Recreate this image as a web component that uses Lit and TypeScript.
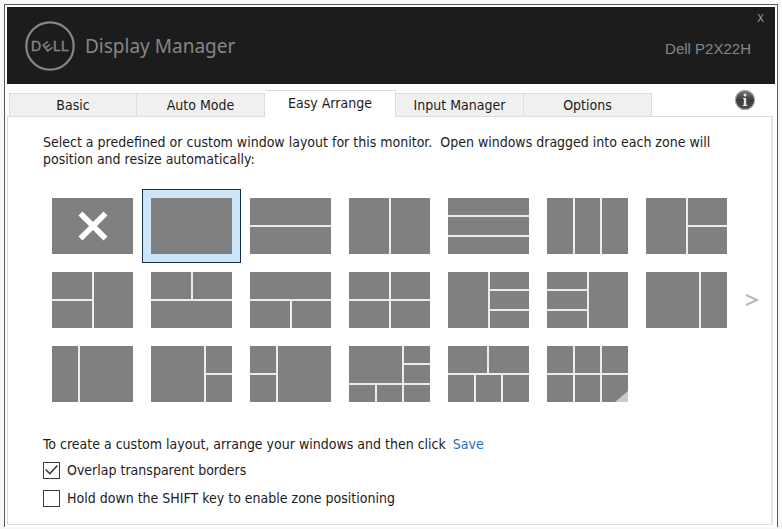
import { LitElement, html, css, svg } from "lit";
import { customElement, property, state } from "lit/decorators.js";
import { classMap } from "lit/directives/class-map.js";
import { styleMap } from "lit/directives/style-map.js";

/** A zone on a 6 × 6 track grid: column start, column span, row start, row span. */
type Zone = [number, number, number, number];

interface Layout {
  name: string;
  zones: Zone[];
  none?: boolean;
  more?: boolean;
}

const LAYOUTS: Layout[] = [
  { name: "No layout", zones: [[1, 6, 1, 6]], none: true },
  { name: "Full screen", zones: [[1, 6, 1, 6]] },
  { name: "Two rows", zones: [[1, 6, 1, 3], [1, 6, 4, 3]] },
  { name: "Two columns", zones: [[1, 3, 1, 6], [4, 3, 1, 6]] },
  { name: "Three rows", zones: [[1, 6, 1, 2], [1, 6, 3, 2], [1, 6, 5, 2]] },
  { name: "Three columns", zones: [[1, 2, 1, 6], [3, 2, 1, 6], [5, 2, 1, 6]] },
  { name: "Left half, two right", zones: [[1, 3, 1, 6], [4, 3, 1, 3], [4, 3, 4, 3]] },
  { name: "Two left, right half", zones: [[1, 3, 1, 3], [1, 3, 4, 3], [4, 3, 1, 6]] },
  { name: "Two top, bottom half", zones: [[1, 3, 1, 3], [4, 3, 1, 3], [1, 6, 4, 3]] },
  { name: "Top half, two bottom", zones: [[1, 6, 1, 3], [1, 3, 4, 3], [4, 3, 4, 3]] },
  { name: "Four quarters", zones: [[1, 3, 1, 3], [4, 3, 1, 3], [1, 3, 4, 3], [4, 3, 4, 3]] },
  { name: "Left half, three right", zones: [[1, 3, 1, 6], [4, 3, 1, 2], [4, 3, 3, 2], [4, 3, 5, 2]] },
  { name: "Three left, right half", zones: [[1, 3, 1, 2], [1, 3, 3, 2], [1, 3, 5, 2], [4, 3, 1, 6]] },
  { name: "Wide left", zones: [[1, 4, 1, 6], [5, 2, 1, 6]] },
  { name: "Wide right", zones: [[1, 2, 1, 6], [3, 4, 1, 6]] },
  { name: "Wide left, two right", zones: [[1, 4, 1, 6], [5, 2, 1, 3], [5, 2, 4, 3]] },
  { name: "Two left, wide right", zones: [[1, 2, 1, 3], [1, 2, 4, 3], [3, 4, 1, 6]] },
  {
    name: "One large, five small",
    zones: [[1, 4, 1, 4], [5, 2, 1, 2], [5, 2, 3, 2], [1, 2, 5, 2], [3, 2, 5, 2], [5, 2, 5, 2]],
  },
  {
    name: "Two top, three bottom",
    zones: [[1, 3, 1, 3], [4, 3, 1, 3], [1, 2, 4, 3], [3, 2, 4, 3], [5, 2, 4, 3]],
  },
  {
    name: "Six zones",
    zones: [[1, 2, 1, 3], [3, 2, 1, 3], [5, 2, 1, 3], [1, 2, 4, 3], [3, 2, 4, 3], [5, 2, 4, 3]],
    more: true,
  },
];

@customElement("layout-tile")
class LayoutTile extends LitElement {
  @property({ attribute: false }) layout!: Layout;
  @property({ type: Boolean }) selected = false;

  static styles = css`
    :host {
      display: block;
      height: 56px;
    }
    .tile {
      position: relative;
      display: grid;
      grid-template-columns: repeat(6, 1fr);
      grid-template-rows: repeat(6, 1fr);
      gap: 2px;
      width: 100%;
      height: 100%;
      margin: 0;
      padding: 0;
      border: 0;
      background: #ececec;
      cursor: pointer;
    }
    .selected {
      box-shadow: 0 0 0 8px #cce5f9, 0 0 0 9px #12304a;
    }
    .zone {
      background: #808080;
    }
    .cross {
      position: absolute;
      inset: 0;
      margin: auto;
      width: 30px;
      height: 30px;
    }
    .corner {
      position: absolute;
      right: 0;
      bottom: 0;
      width: 13px;
      height: 11px;
      background: #cacaca;
      clip-path: polygon(100% 0, 100% 100%, 0 100%);
    }
  `;

  render() {
    const { name, zones, none, more } = this.layout;
    return html`<button
      class=${classMap({ tile: true, selected: this.selected })}
      aria-label=${name}
      aria-pressed=${this.selected}
    >
      ${zones.map(
        ([c, cs, r, rs]) =>
          html`<span class="zone" style=${styleMap({ gridArea: `${r} / ${c} / span ${rs} / span ${cs}` })}></span>`
      )}
      ${none
        ? html`<svg class="cross" viewBox="0 0 30 30">
            <path d="M2.500 2.500 27.500 27.500M27.500 2.500 2.500 27.500" stroke="#fff" stroke-width="5.600" />
          </svg>`
        : null}
      ${more ? html`<span class="corner"></span>` : null}
    </button>`;
  }
}

const dellMark = svg`
  <circle cx="26" cy="26" r="23.7" fill="none" stroke="#868686" stroke-width="2.2" />
  <g fill="#868686" font-family="Liberation Sans, Arial, sans-serif" font-size="14" stroke="#868686" stroke-width="0.4">
    <text x="7" y="31">D</text>
    <text x="-4.500" y="4.500" font-size="12" transform="translate(23.500 26) rotate(-38)">E</text>
    <text x="29" y="31">L</text>
    <text x="37" y="31">L</text>
  </g>`;

@customElement("app-root")
class AppRoot extends LitElement {
  @state() private tab = "Easy Arrange";
  @state() private chosen = 1;

  private tabs = ["Basic", "Auto Mode", "Easy Arrange", "Input Manager", "Options"];

  static styles = css`
    :host {
      display: block;
      box-sizing: border-box;
      min-height: 100vh;
      padding: 4px 4px 3px;
      background: #f8f8f8;
      color: #1c1c1c;
      font: 14px/17px "DejaVu Sans Condensed", Tahoma, "Noto Sans", sans-serif;
    }
    button,
    input {
      margin: 0;
      font: inherit;
      color: inherit;
    }
    .window {
      border: 1px solid #5a5a5a;
      border-bottom: 0;
      padding: 2px;
      background: #fff;
    }
    .header {
      display: flex;
      align-items: center;
      gap: 9px;
      box-sizing: border-box;
      height: 77px;
      padding: 0 10px 0 17px;
      background: #1c1c1c;
      color: #868686;
    }
    .logo {
      width: 52px;
      height: 52px;
    }
    .title {
      flex: 1;
      margin: 0;
      font: 19px/28px "Noto Sans", "Open Sans", sans-serif;
    }
    .side {
      display: flex;
      flex-direction: column;
      align-items: flex-end;
      align-self: stretch;
      gap: 12px;
      padding-top: 4px;
    }
    .close {
      padding: 0 1px;
      border: 0;
      background: none;
      font: 10px/16px "Liberation Sans", Arial, sans-serif;
      color: #a8a8a8;
    }
    .model {
      padding-right: 14px;
      font: 15px/20px "Liberation Sans", Arial, sans-serif;
    }
    .bar {
      display: flex;
      align-items: flex-end;
      height: 32px;
      padding: 0 19px 0 2px;
    }
    .tabs {
      display: flex;
      align-items: flex-end;
      flex: 1;
    }
    .tab {
      flex: 0 1 128px;
      height: 23px;
      padding: 0;
      border: 1px solid #dcdcdc;
      border-width: 1px 1px 0 0;
      background: #f0f0f0;
      white-space: nowrap;
    }
    .tab:first-child {
      border-left-width: 1px;
    }
    .active {
      flex-basis: 131px;
      position: relative;
      height: 27px;
      margin-bottom: -1px;
      padding-bottom: 2px;
      background: #fff;
    }
    .info {
      align-self: center;
      width: 22px;
      height: 22px;
      padding: 0;
      border: 0;
      background: none;
    }
    .info svg,
    .next svg {
      display: block;
    }
    .panel {
      margin-right: 2px;
      padding: 17px 0 17px 35px;
      border: 1px solid #dcdcdc;
      border-right: 2px solid #e4e4e4;
    }
    .intro {
      margin: 0 44px 30px 0;
    }
    .chooser {
      display: flex;
      align-items: center;
      gap: 18px;
      padding: 0 12px 0 9px;
    }
    .tiles {
      flex: 1;
      display: grid;
      grid-template-columns: repeat(7, 81px);
      justify-content: space-between;
      row-gap: 18px;
    }
    .next {
      padding: 0;
      border: 0;
      background: none;
    }
    .save-line {
      margin: 34px 0 8px;
    }
    .save {
      margin-left: 3px;
      color: #1f6fc4;
      text-decoration: none;
    }
    .option {
      display: flex;
      align-items: center;
      gap: 7px;
      width: max-content;
      height: 18px;
      margin-bottom: 10px;
    }
    .option:last-child {
      margin-bottom: 0;
    }
    .box {
      appearance: none;
      display: grid;
      place-items: center;
      box-sizing: border-box;
      width: 17px;
      height: 17px;
      border: 1px solid #3c3c3c;
      background: #fff;
    }
    .box:checked::before {
      content: "";
      width: 13px;
      height: 11px;
      background: #3c3c3c;
      clip-path: polygon(0 50%, 9% 41%, 36% 72%, 91% 4%, 100% 13%, 37% 94%);
    }
  `;

  render() {
    return html`
      <main class="window">
        <header class="header">
          <svg class="logo" viewBox="0 0 52 52" role="img" aria-label="Dell">${dellMark}</svg>
          <h1 class="title">Display Manager</h1>
          <div class="side">
            <button class="close" aria-label="Close">X</button>
            <span class="model">Dell P2X22H</span>
          </div>
        </header>
        <div class="bar">
          <nav class="tabs" role="tablist">
            ${this.tabs.map(
              (t) => html`<button
                class=${classMap({ tab: true, active: t === this.tab })}
                role="tab"
                aria-selected=${t === this.tab}
                @click=${() => (this.tab = t)}
              >${t}</button>`
            )}
          </nav>
          <button class="info" aria-label="Information">
            <svg width="22" height="22" viewBox="0 0 22 22">
              <defs>
                <linearGradient id="ball" x1="0" y1="0" x2="0" y2="1">
                  <stop offset="0" stop-color="#7a7a7a" />
                  <stop offset="0.500" stop-color="#3a3a3a" />
                  <stop offset="1" stop-color="#505050" />
                </linearGradient>
              </defs>
              <circle cx="11" cy="11" r="9.700" fill="url(#ball)" stroke="#b0b0b0" stroke-width="1.200" />
              <circle cx="11" cy="6" r="1.500" fill="#e6e6e6" />
              <path d="M9 9h3.200v7h1v1H8.800v-1h1v-6H9z" fill="#e6e6e6" />
            </svg>
          </button>
        </div>
        <section class="panel">
          <p class="intro">
            Select a predefined or custom window layout for this monitor.&nbsp; Open windows dragged into each zone will
            position and resize automatically:
          </p>
          <div class="chooser">
            <div class="tiles">
              ${LAYOUTS.map(
                (l, i) => html`<layout-tile
                  .layout=${l}
                  ?selected=${i === this.chosen}
                  @click=${() => (this.chosen = i)}
                ></layout-tile>`
              )}
            </div>
            <button class="next" aria-label="More layouts">
              <svg width="14" height="14" viewBox="0 0 14 14">
                <path d="M1 2 12 7 1 12" fill="none" stroke="#b8b8b8" stroke-width="2" />
              </svg>
            </button>
          </div>
          <p class="save-line">
            To create a custom layout, arrange your windows and then click <a class="save" href="#save">Save</a>
          </p>
          <label class="option"><input class="box" type="checkbox" checked />Overlap transparent borders</label>
          <label class="option"><input class="box" type="checkbox" />Hold down the SHIFT key to enable zone positioning</label>
        </section>
      </main>
    `;
  }
}
